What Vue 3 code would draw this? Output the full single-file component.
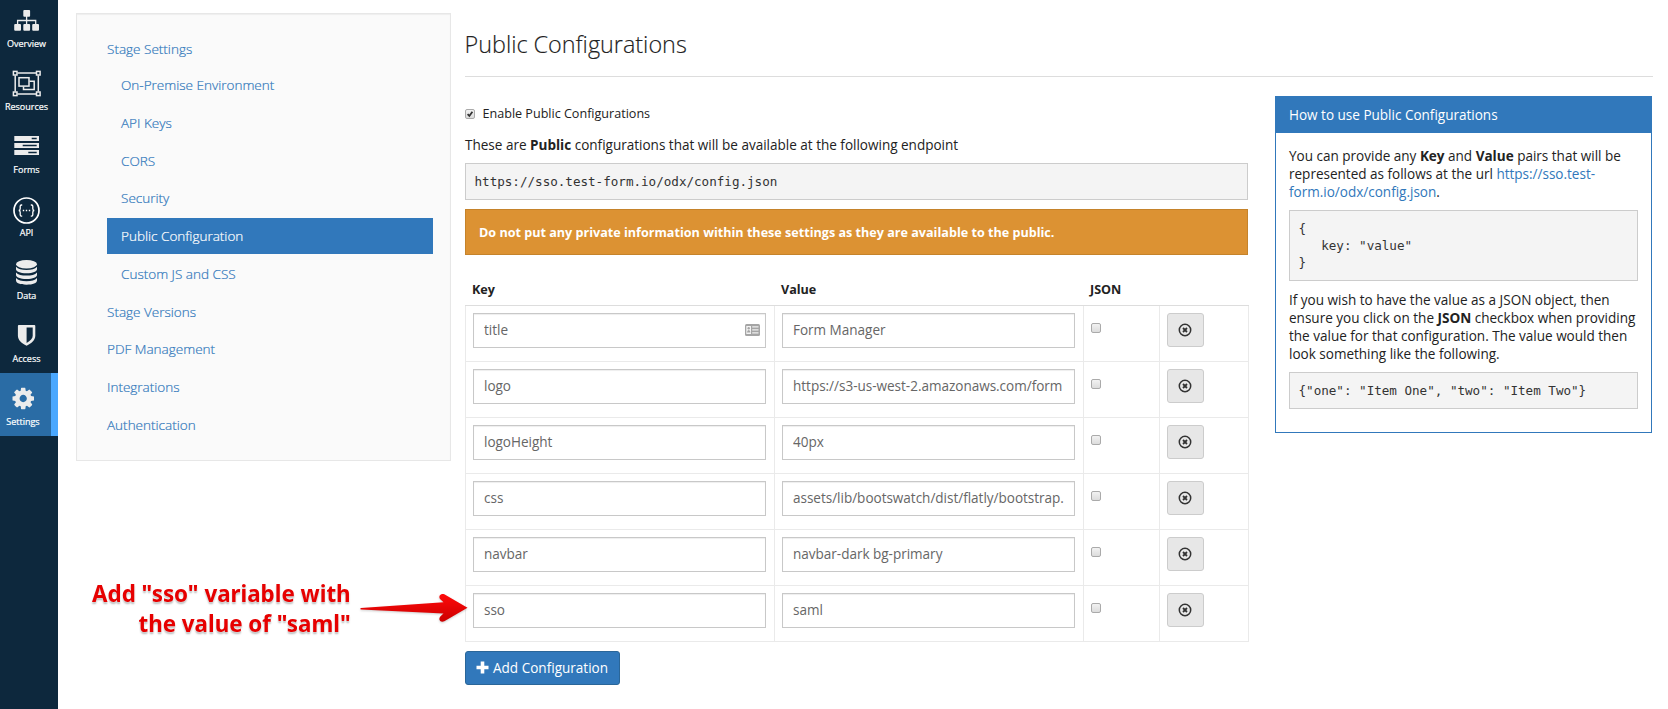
<script setup>
import { ref } from 'vue'

const nav = [
  { id: 'overview', label: 'Overview' },
  { id: 'resources', label: 'Resources' },
  { id: 'forms', label: 'Forms' },
  { id: 'api', label: 'API' },
  { id: 'data', label: 'Data' },
  { id: 'access', label: 'Access' },
  { id: 'settings', label: 'Settings' },
]

const menu = [
  { label: 'Stage Settings' },
  { label: 'On-Premise Environment', sub: true },
  { label: 'API Keys', sub: true },
  { label: 'CORS', sub: true },
  { label: 'Security', sub: true },
  { label: 'Public Configuration', sub: true, active: true },
  { label: 'Custom JS and CSS', sub: true },
  { label: 'Stage Versions' },
  { label: 'PDF Management' },
  { label: 'Integrations' },
  { label: 'Authentication' },
]

const rows = ref([
  { key: 'title', value: 'Form Manager', contact: true },
  { key: 'logo', value: 'https://s3-us-west-2.amazonaws.com/form' },
  { key: 'logoHeight', value: '40px' },
  { key: 'css', value: 'assets/lib/bootswatch/dist/flatly/bootstrap.' },
  { key: 'navbar', value: 'navbar-dark bg-primary' },
  { key: 'sso', value: 'saml' },
])

const objectSample = '{\n   key: "value"\n}'
const jsonSample = '{"one": "Item One", "two": "Item Two"}'
</script>

<template>
  <div class="app">
    <nav class="rail">
      <a v-for="n in nav" :key="n.id" class="rail-item" :class="{ active: n.id === 'settings' }">
        <svg class="rail-icon" viewBox="0 0 31 31">
          <g v-if="n.id === 'overview'" fill="#ececec">
            <rect x="12.3" y="5" width="6.8" height="6.8" rx="1" />
            <rect x="3.2" y="19" width="6.8" height="6.8" rx="1" />
            <rect x="12.3" y="19" width="6.8" height="6.8" rx="1" />
            <rect x="21.2" y="19" width="6.8" height="6.8" rx="1" />
            <path d="M15.6 11V19M6.6 19.5V15.5H24.7V19.5" fill="none" stroke="#ececec" stroke-width="1.3" />
          </g>
          <g v-else-if="n.id === 'resources'" fill="none" stroke="#ececec" stroke-width="1.5">
            <path d="M6.5 5H25M6.5 26H25M4.2 7.5V23.5M27.3 7.5V23.5" />
            <rect x="2.4" y="3.4" width="3.6" height="3.6" />
            <rect x="25.5" y="3.4" width="3.6" height="3.6" />
            <rect x="2.4" y="24" width="3.6" height="3.6" />
            <rect x="25.5" y="24" width="3.6" height="3.6" />
            <rect x="8" y="9.7" width="10" height="8.4" />
            <path d="M18.5 13.2H23.2V21.6H12.5V18.5" />
          </g>
          <g v-else-if="n.id === 'forms'">
            <path d="M3.3 5H28V10H3.3zM3.3 12H28V17H3.3zM3.3 19H28V24H3.3z" fill="#ececec" />
            <path d="M20.7 6.7H25.7V8.3H20.7zM11.7 13.7H25.7V15.3H11.7zM17.3 20.7H25.7V22.3H17.3z" fill="#0d283d" />
          </g>
          <g v-else-if="n.id === 'api'" fill="none" stroke="#fff">
            <circle cx="15.5" cy="16.5" r="12.5" stroke-width="1.7" />
            <path d="M11.2 11H10.4Q9.2 11 9.2 12.3V14.8Q9.2 16.5 7.7 16.5Q9.2 16.5 9.2 18.2V20.8Q9.2 22.1 10.4 22.1H11.2M19.8 11H20.6Q21.8 11 21.8 12.3V14.8Q21.8 16.5 23.3 16.5Q21.8 16.5 21.8 18.2V20.8Q21.8 22.1 20.6 22.1H19.8" stroke-width="1.3" />
            <path d="M11.8 16.5H13.2M14.8 16.5H16.2M17.8 16.5H19.2" stroke-width="1.4" />
          </g>
          <g v-else-if="n.id === 'data'" fill="#ececec">
            <ellipse cx="15.5" cy="7.2" rx="10.5" ry="4.2" />
            <path d="M5 9.8Q8 13 15.5 13T26 9.8V12.2C26 14.5 22 16.2 15.5 16.2S5 14.5 5 12.2z" />
            <path d="M5 15.4Q8 18.6 15.5 18.6T26 15.4V17.9C26 20.2 22 21.9 15.5 21.9S5 20.2 5 17.9z" />
            <path d="M5 21.1Q8 24.3 15.5 24.3T26 21.1V23.5C26 25.9 22 27.7 15.5 27.7S5 25.9 5 23.5z" />
          </g>
          <path v-else-if="n.id === 'access'" fill="#ececec" fill-rule="evenodd" d="M7.8 5H23.4Q24.3 5 24.3 5.9V15.8C24.3 20 20.5 23.4 15.6 25.8C10.7 23.4 6.9 20 6.9 15.8V5.9Q6.9 5 7.8 5zM15.6 7.5V22.9C19.4 20.8 21.7 18.5 21.7 15.8V7.5z" />
          <svg v-else x="4.3" y="4.6" width="21.8" height="21.8" viewBox="128 128 1536 1536">
            <path fill="#ececec" d="M1152 896q0-106-75-181t-181-75-181 75-75 181 75 181 181 75 181-75 75-181zm512-109v222q0 12-8 23t-20 13l-185 28q-19 54-39 91 35 50 107 138 10 12 10 25t-9 23q-27 37-99 108t-94 71q-12 0-26-9l-138-108q-44 23-91 38-16 136-29 186-7 28-36 28h-222q-14 0-24.5-8.5t-11.5-21.5l-28-184q-49-16-90-37l-141 107q-10 9-25 9-14 0-25-11-126-114-165-168-7-10-7-23 0-12 8-23 15-21 51-66.5t54-70.5q-27-50-41-99l-183-27q-13-2-21-12.5t-8-23.5v-222q0-12 8-23t19-13l186-28q14-46 39-92-40-57-107-138-10-12-10-24 0-10 9-23 26-36 98.5-107.5t94.5-71.5q13 0 26 10l138 107q44-23 91-38 16-136 29-186 7-28 36-28h222q14 0 24.5 8.5t11.5 21.5l28 184q49 16 90 37l142-107q9-9 24-9 13 0 25 10 129 119 165 170 7 8 7 22 0 12-8 23-15 21-51 66.5t-54 70.5q26 50 41 98l183 28q13 2 21 12.5t8 23.5z" />
          </svg>
        </svg>
        <span class="rail-label">{{ n.label }}</span>
      </a>
    </nav>

    <aside class="side">
      <a v-for="m in menu" :key="m.label" class="side-link" :class="{ sub: m.sub, active: m.active }">{{ m.label }}</a>
    </aside>

    <main class="main">
      <h3 class="title">Public Configurations</h3>
      <div class="columns">
        <section class="config">
          <label class="enable">
            <span class="check">
              <svg viewBox="0 0 10 10"><path d="M2 5.2L4.2 7.4L8 2.2" fill="none" stroke="#333" stroke-width="2.2" /></svg>
            </span>
            <span class="enable-text">Enable Public Configurations</span>
          </label>
          <p class="intro">These are <b>Public</b> configurations that will be available at the following endpoint</p>
          <pre class="code endpoint">https://sso.test-form.io/odx/config.json</pre>
          <div class="alert">Do not put any private information within these settings as they are available to the public.</div>
          <div class="table">
            <div class="tr head">
              <span>Key</span><span>Value</span><span>JSON</span><span></span>
            </div>
            <div v-for="r in rows" :key="r.key" class="tr">
              <div class="td">
                <div class="field">
                  <input v-model="r.key" class="input" type="text" />
                  <svg v-if="r.contact" class="contact" viewBox="0 0 15 12">
                    <rect width="15" height="12" rx="1.5" fill="#a5a5a5" />
                    <path d="M1.3 2H6V10H1.3z" fill="#f4f4f4" />
                    <circle cx="3.7" cy="4.3" r="1.2" fill="#a5a5a5" />
                    <path d="M2 8.6Q2 6 3.7 6T5.4 8.6z" fill="#a5a5a5" />
                    <path d="M7.2 2.8H13.5M7.2 5.8H13.5M7.2 8.8H13.5" stroke="#f0f0f0" stroke-width="1.2" />
                  </svg>
                </div>
              </div>
              <div class="td"><input v-model="r.value" class="input" type="text" /></div>
              <div class="td json"><span class="check"></span></div>
              <div class="td last">
                <button class="remove" type="button">
                  <svg viewBox="0 0 14 14" fill="none" stroke="#333">
                    <circle cx="7" cy="7" r="5.7" stroke-width="1.5" />
                    <path d="M5 5L9 9M9 5L5 9" stroke-width="1.8" />
                  </svg>
                </button>
              </div>
            </div>
          </div>
          <button class="add" type="button">
            <svg viewBox="0 0 13 13"><path d="M6.5 .5V12.5M.5 6.5H12.5" stroke="#fff" stroke-width="3.6" /></svg>
            <span>Add Configuration</span>
          </button>
        </section>

        <section class="help">
          <header>How to use Public Configurations</header>
          <div class="help-body">
            <p>You can provide any <b>Key</b> and <b>Value</b> pairs that will be<br />represented as follows at the url <a>https://sso.test-<br />form.io/odx/config.json</a>.</p>
            <pre class="code sample">{{ objectSample }}</pre>
            <p>If you wish to have the value as a JSON object, then<br />ensure you click on the <b>JSON</b> checkbox when providing<br />the value for that configuration. The value would then<br />look something like the following.</p>
            <pre class="code">{{ jsonSample }}</pre>
          </div>
        </section>
      </div>
    </main>

    <div class="note">Add "sso" variable with<br />the value of "saml"</div>
    <svg class="arrow" viewBox="0 0 112 34">
      <defs>
        <linearGradient id="arrowFill" x1="0" y1="0" x2="0" y2="1">
          <stop offset="0" stop-color="#ff0a0a" />
          <stop offset="1" stop-color="#cc0000" />
        </linearGradient>
      </defs>
      <path d="M2 17L84.500 11.300L81.300 8.200C78.800 5.400 81.600 1.800 85.300 3.300L108.500 16.700L85.300 30.200C81.600 31.900 78.800 28.500 81.300 25.600L84.500 22.500L2 18.600Q.5 17.800 2 17z" fill="url(#arrowFill)" />
    </svg>
  </div>
</template>

<style>
body {
  background: #fff;
  overflow: hidden;
}
</style>

<style scoped>
.app {
  position: relative;
  display: flex;
  align-items: flex-start;
  width: 1668px;
  height: 709px;
  overflow: hidden;
  font-family: "Open Sans", sans-serif;
  font-size: 13.55px;
  letter-spacing: -0.012px;
  line-height: 18px;
  color: #222;
}
.app * {
  box-sizing: border-box;
}

.rail {
  width: 58px;
  height: 714px;
  margin-top: -5px;
  background: #0d283d;
  flex: none;
}
.rail-item {
  display: flex;
  flex-direction: column;
  align-items: center;
  height: 63px;
  padding: 10px 5px 0 0;
}
.rail-item.active {
  background: #2a6ca5;
  border-right: 7px solid #4aa8ff;
}
.rail-icon {
  width: 31px;
  height: 31px;
  flex: none;
}
.rail-label {
  font-size: 9px;
  font-weight: 500;
  line-height: 14px;
  color: #fff;
  margin-top: 1px;
  white-space: nowrap;
  -webkit-text-stroke: 0.2px #fff;
}

.side {
  width: 375px;
  height: 448px;
  margin: 13px 0 0 18px;
  padding: 17px 17px 0 30px;
  border: 1px solid #e7e7e7;
  background: #fafafa;
  box-shadow: inset 0 1px 1px rgba(0, 0, 0, 0.05);
  flex: none;
}
.side-link {
  display: block;
  height: 36px;
  margin-bottom: 1.75px;
  line-height: 36.5px;
  font-weight: 300;
  color: #3178bb;
  -webkit-text-stroke: 0.2px currentColor;
}
.side-link:first-child {
  margin-bottom: 0;
}
.side-link.sub {
  padding-left: 14px;
}
.side-link.active {
  background: #3178bb;
  color: #fff;
}

.main {
  width: 1188px;
  margin-left: 14px;
}
.title {
  height: 77px;
  margin: 0;
  padding-top: 28px;
  border-bottom: 1px solid #ddd;
  font-size: 23.4px;
  font-weight: 300;
  line-height: 32px;
  text-indent: -0.5px;
  -webkit-text-stroke: 0.15px currentColor;
}
.columns {
  display: flex;
  align-items: flex-start;
}
.config {
  width: 784px;
  margin-top: 28px;
}
.enable {
  display: flex;
  align-items: center;
  height: 18px;
  gap: 7.5px;
}
.enable-text {
  font-size: 12.6px;
}
.check {
  display: block;
  width: 10px;
  height: 10px;
  border: 1px solid #aaa;
  border-radius: 2px;
  background: linear-gradient(#f2f2f2, #dcdcdc);
}
.check svg {
  display: block;
  width: 8px;
  height: 8px;
}
.intro {
  margin: 13px 0 0;
}
.code {
  margin: 0;
  height: 37px;
  padding: 9px 8.5px;
  border: 1px solid #ccc;
  background: #f4f4f4;
  font-family: "DejaVu Sans Mono", monospace;
  font-size: 12.6px;
  line-height: 17px;
  color: #333;
}
.endpoint {
  width: 783px;
  margin-top: 9px;
}
.alert {
  width: 783px;
  height: 46px;
  margin-top: 9px;
  padding-left: 13px;
  border: 1px solid #c5832b;
  background: #dc9233;
  line-height: 45px;
  font-size: 12.6px;
  letter-spacing: 0;
  font-weight: 700;
  color: #fff;
  white-space: nowrap;
}
.table {
  margin-top: 15px;
}
.tr {
  display: grid;
  grid-template-columns: 310px 309px 76px 89px;
  height: 56px;
  border-bottom: 1px solid #eaeaea;
}
.head {
  height: 36px;
  border-bottom-color: #ddd;
  font-size: 12.6px;
  font-weight: 700;
  line-height: 40px;
}
.head span {
  padding-left: 6px;
}
.head span:first-child {
  padding-left: 7px;
}
.td {
  padding: 7px 8px 0 7px;
  border-right: 1px solid #eaeaea;
}
.td:first-child {
  border-left: 1px solid #eaeaea;
}
.field {
  position: relative;
}
.input {
  display: block;
  width: 293px;
  height: 35px;
  padding: 0 10px 1px;
  border: 1px solid #c8c8c8;
  border-radius: 0;
  outline: none;
  box-shadow: inset 0 1px 1px rgba(0, 0, 0, 0.07);
  background: #fff;
  font: 13.55px "Open Sans", sans-serif;
  letter-spacing: -0.025px;
  color: #666;
}
.contact {
  position: absolute;
  right: 6px;
  top: 11px;
  width: 15px;
  height: 12px;
}
.json {
  padding: 17px 0 0 7px;
}
.remove {
  display: flex;
  align-items: center;
  justify-content: center;
  width: 37px;
  height: 34px;
  padding: 0 1px 1px 0;
  border: 1px solid #ccc;
  border-radius: 3px;
  background: #e7e7e7;
}
.remove svg {
  width: 14px;
  height: 14px;
}
.add {
  display: flex;
  align-items: center;
  gap: 4px;
  width: 155px;
  height: 34px;
  margin-top: 9px;
  padding: 0 0 1px 10px;
  border: 1px solid #2a6699;
  border-radius: 3px;
  background: #3178bb;
  color: #fff;
  font: 13.55px "Open Sans", sans-serif;
  white-space: nowrap;
}
.add svg {
  width: 13px;
  height: 13px;
}

.help {
  width: 377px;
  height: 337px;
  margin: 19px 0 0 26px;
  border: 1px solid #3178bb;
}
.help header {
  height: 36px;
  padding-left: 13px;
  background: #3178bb;
  color: #fff;
  line-height: 36px;
}
.help-body {
  padding: 14px 13px 0;
}
.help p {
  margin: 0;
  white-space: nowrap;
}
.help a {
  color: #3178bb;
}
.help .code {
  margin-top: 9px;
}
.help .sample {
  height: 71px;
  margin-bottom: 10px;
}

.note {
  position: absolute;
  right: 1317.5px;
  top: 577.5px;
  font: 700 23.7px/30px "Noto Sans", sans-serif;
  color: #e60000;
  text-align: right;
  white-space: nowrap;
  transform: scaleX(0.945);
  transform-origin: right center;
  text-shadow: 0 0 2px #fff, 0 2px 2px rgba(0, 0, 0, 0.3);
}
.arrow {
  position: absolute;
  left: 359px;
  top: 591px;
  width: 112px;
  height: 34px;
  filter: drop-shadow(0 1px 1px rgba(0, 0, 0, 0.2));
}
</style>
